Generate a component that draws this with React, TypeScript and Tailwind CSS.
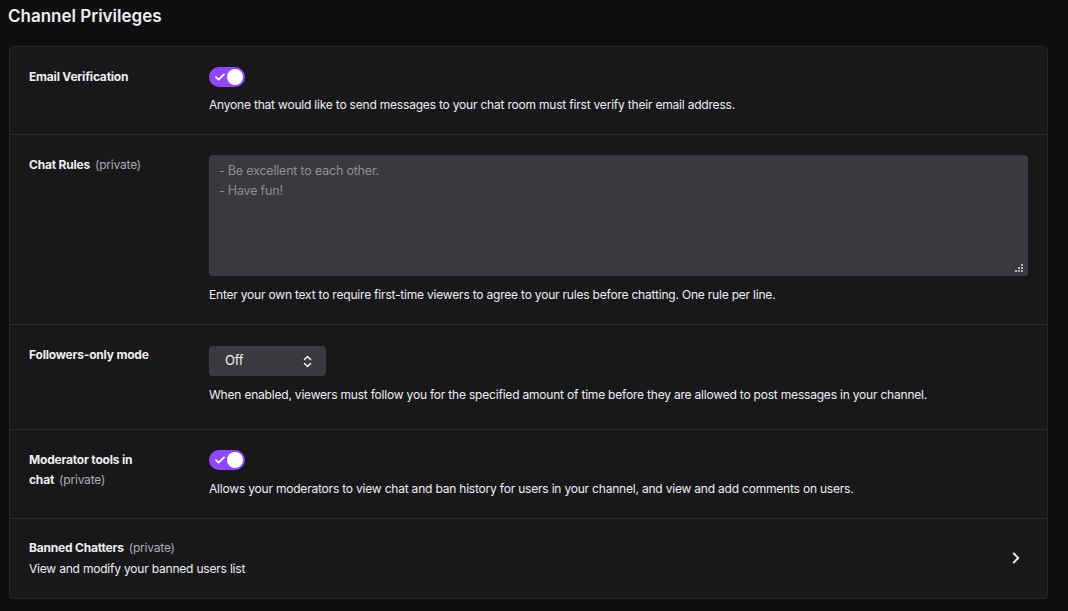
import { ChevronRight } from "lucide-react";

function Toggle() {
  return (
    <div className="flex h-[20px] w-[36px] items-center justify-between rounded-full bg-[#9147ff] pl-[6px] pr-[2px]">
      <svg width="10" height="8" viewBox="0 0 10 8" fill="none">
        <path d="M1 4.2 3.6 6.6 9 1.4" stroke="white" strokeWidth="1.8" strokeLinecap="round" strokeLinejoin="round" />
      </svg>
      <div className="h-[16px] w-[16px] rounded-full bg-white" />
    </div>
  );
}

function Private() {
  return (
    <span className="ml-[5px] inline-block text-[12px] font-normal leading-[20px] tracking-[-0.2px] text-[#adadb8]">
      (private)
    </span>
  );
}

function Row({
  label,
  children,
  className,
}: {
  label: React.ReactNode;
  children: React.ReactNode;
  className?: string;
}) {
  return (
    <div className={`flex border-b border-[#2c2c31] px-[19px] pt-[20px] ${className ?? "pb-[20px]"}`}>
      <div className="w-[180px] shrink-0 pr-[54px] text-[12px] font-bold leading-[20px] tracking-[-0.2px] text-[#efeff1]">{label}</div>
      <div className="flex-1 text-[12px] tracking-[-0.2px]">{children}</div>
    </div>
  );
}

export default function App() {
  return (
    <div
      className="min-h-[611px] bg-[#0e0e10] px-[9px] text-[#efeff1]"
      style={{ fontFamily: "Inter, 'Noto Sans', sans-serif" }}
    >
      <h1 className="-ml-[1px] pt-[4px] text-[17px] font-semibold leading-[24px]">Channel Privileges</h1>
      <div className="mr-[11px] mt-[18px] rounded-[4px] border border-[#26262b] bg-[#18181b]">
        <Row label="Email Verification">
          <Toggle />
          <p className="mt-[9px] leading-[18px]">
            Anyone that would like to send messages to your chat room must first verify their email address.
          </p>
        </Row>
        <Row
          label={
            <>
              Chat Rules
              <Private />
            </>
          }
        >
          <div className="relative h-[121px] rounded-[4px] bg-[#3a3a3e] px-[10px] py-[6px] text-[12.5px] leading-[20px] text-[#8e8e96]">
            <div>- Be excellent to each other.</div>
            <div>- Have fun!</div>
            <svg className="absolute bottom-[4px] right-[5px]" width="8" height="8" viewBox="0 0 8 8">
              <rect x="6" y="0" width="2" height="2" fill="#b8b8c0" />
              <rect x="3" y="3" width="2" height="2" fill="#b8b8c0" />
              <rect x="6" y="3" width="2" height="2" fill="#b8b8c0" />
              <rect x="0" y="6" width="2" height="2" fill="#b8b8c0" />
              <rect x="3" y="6" width="2" height="2" fill="#b8b8c0" />
              <rect x="6" y="6" width="2" height="2" fill="#b8b8c0" />
            </svg>
          </div>
          <p className="mt-[10px] leading-[18px]">
            Enter your own text to require first-time viewers to agree to your rules before chatting. One rule per line.
          </p>
        </Row>
        <Row label="Followers-only mode" className="pb-[25px]">
          <div className="mt-[1px] flex h-[30px] w-[117px] items-center justify-between rounded-[4px] bg-[#3a3a3e] pl-[16px] pr-[14px] text-[13px]">
            <span>Off</span>
            <svg width="9" height="13" viewBox="0 0 9 13" fill="none">
              <path d="M1.5 4.5 4.5 1.5 7.5 4.5M1.5 8.5 4.5 11.5 7.5 8.5" stroke="#efeff1" strokeWidth="1.6" strokeLinecap="round" strokeLinejoin="round" />
            </svg>
          </div>
          <p className="mt-[10px] leading-[18px]">
            When enabled, viewers must follow you for the specified amount of time before they are allowed to post messages in your channel.
          </p>
        </Row>
        <Row
          label={
            <>
              Moderator tools in chat
              <Private />
            </>
          }
        >
          <Toggle />
          <p className="mt-[10px] leading-[18px]">
            Allows your moderators to view chat and ban history for users in your channel, and view and add comments on users.
          </p>
        </Row>
        <div className="flex items-center justify-between px-[19px] pb-[20px] pt-[19px] text-[12px] tracking-[-0.2px]">
          <div>
            <div className="font-bold leading-[20px]">
              Banned Chatters
              <Private />
            </div>
            <div className="mt-[2px] leading-[18px]">View and modify your banned users list</div>
          </div>
          <ChevronRight size={18} strokeWidth={2.5} className="mr-[3px]" />
        </div>
      </div>
    </div>
  );
}
